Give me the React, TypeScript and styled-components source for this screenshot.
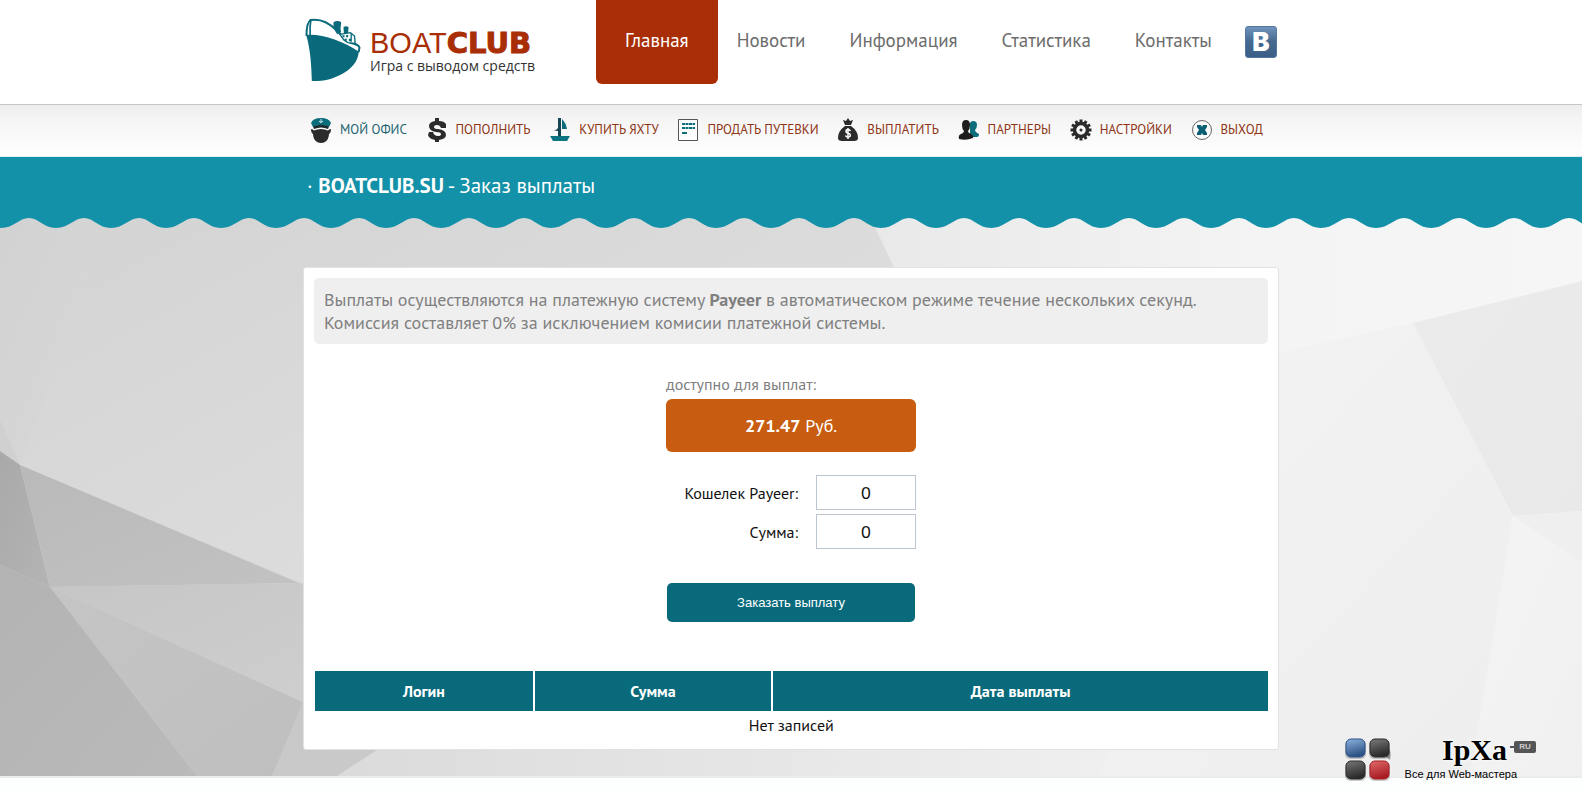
import React from "react";
import styled, { createGlobalStyle } from "styled-components";

const sans = `"PT Sans", "Noto Sans", sans-serif`;
const arial = `"Liberation Sans", Arial, sans-serif`;
const teal = "#086a7b";
const brick = "#a92e06";

const GlobalStyle = createGlobalStyle`
  * { box-sizing: border-box; }
  body { margin: 0; background: #fdfefe; font-family: ${sans}; font-size: 16px; color: #111; }
  a { text-decoration: none; }
`;

const Page = styled.div`
  position: relative;
  overflow: hidden;
`;

const Container = styled.div`
  width: 100%;
  max-width: 976px;
  margin: 0 auto;
`;

const Header = styled.header`
  background: #fff;
`;

const HeaderRow = styled(Container)`
  display: flex;
  align-items: flex-start;
  height: 104px;
`;

const Logo = styled.a`
  display: flex;
  align-items: flex-start;
  gap: 8px;
  padding: 17px 0 0 2px;
  width: 293px;
`;

const LogoText = styled.span`
  display: flex;
  flex-direction: column;
  padding-top: 12px;
`;

const LogoName = styled.span`
  font-family: ${arial};
  font-size: 29px;
  line-height: 29px;
  color: ${brick};
  white-space: nowrap;
`;

const LogoHeavy = styled.b`
  font-family: "DejaVu Sans", sans-serif;
  -webkit-text-stroke: 1px ${brick};
`;

const LogoTagline = styled.span`
  font-family: "Open Sans", sans-serif;
  font-size: 14px;
  line-height: 16px;
  color: #333;
  white-space: nowrap;
`;

const MainNav = styled.nav`
  display: flex;
`;

const MainLink = styled.a<{ $active?: boolean }>`
  height: 84px;
  padding: ${p => (p.$active ? "0 29px" : "0 19px")};
  margin-right: ${p => (p.$active ? "0" : "6px")};
  border-radius: 0 0 6px 6px;
  background: ${p => (p.$active ? brick : "transparent")};
  color: ${p => (p.$active ? "#fff" : "#6c6c6c")};
  font-size: 19px;
  line-height: 80px;
`;

const VkLink = styled.a`
  display: flex;
  align-items: center;
  justify-content: center;
  width: 32px;
  height: 32px;
  margin: 26px 2px 0 auto;
  border-radius: 3px;
  background: linear-gradient(#6f93ba, #44698f 50%, #3b5e86);
  border: 1px solid #54789f;
  color: #fff;
  font-family: Inter, sans-serif;
  font-weight: 900;
  font-size: 26px;
  line-height: 30px;
`;

const Strip = styled.div`
  border-top: 1px solid #c6c6c6;
  border-bottom: 1px solid #dff1f1;
  background: linear-gradient(#ededed, #f5f5f5 30%, #fff);
`;

const StripRow = styled(Container)`
  display: flex;
  justify-content: space-between;
  align-items: center;
  height: 51px;
  padding: 0 16px 2px 7px;
`;

const StripLink = styled.a<{ $current?: boolean }>`
  display: flex;
  align-items: center;
  gap: 8px;
  font-size: 13px;
  line-height: 26px;
  white-space: nowrap;
  color: ${p => (p.$current ? "#1d6470" : "#8e3414")};
`;

const TitleBar = styled.div`
  background: #1391a8;
`;

const Title = styled.h1`
  width: 100%;
  max-width: 976px;
  height: 60px;
  margin: 0 auto;
  padding-left: 4px;
  color: #fff;
  font-size: 21px;
  font-weight: 400;
  line-height: 58px;
`;

const Main = styled.main`
  position: relative;
  padding: 50px 0 26px;
`;

const Backdrop = styled.svg`
  position: absolute;
  inset: 0;
  width: 100%;
  height: 100%;
`;

const Wave = styled.svg`
  position: absolute;
  top: 0;
  left: 0;
  width: 100%;
  height: 12px;
`;

const Card = styled(Container)`
  position: relative;
  padding: 10px;
  background: #fff;
  border: 1px solid #e2e2e2;
  border-radius: 3px;
`;

const Notice = styled.p`
  margin: 0;
  padding: 10px;
  border-radius: 5px;
  background: #efefef;
  color: #808080;
  font-size: 18px;
  line-height: 23px;
`;

const Form = styled.form`
  display: flex;
  flex-direction: column;
  width: 250px;
  margin: 30px auto 49px;
`;

const Caption = styled.span`
  color: #808080;
  font-size: 16px;
  line-height: 20px;
`;

const Amount = styled.div`
  height: 53px;
  margin: 5px 0 23px;
  border-radius: 6px;
  background: #c85c10;
  color: #fff;
  font-size: 18px;
  line-height: 53px;
  text-align: center;
`;

const Field = styled.label`
  display: flex;
  align-items: center;
  justify-content: flex-end;
  gap: 18px;
  margin-bottom: 4px;
  white-space: nowrap;
`;

const Input = styled.input`
  width: 100px;
  height: 35px;
  padding: 0;
  border: 1px solid #bcc5d2;
  background: #fff;
  color: #111;
  font-family: ${sans};
  font-size: 18px;
  text-align: center;
`;

const Submit = styled.button`
  height: 39px;
  margin: 30px 1px 0;
  border: 0;
  border-radius: 5px;
  background: ${teal};
  color: #fff;
  font-family: ${arial};
  font-size: 13px;
`;

const Table = styled.table`
  width: 100%;
  border-collapse: collapse;
  table-layout: fixed;
`;

const HeadCell = styled.th<{ $share: string }>`
  width: ${p => p.$share};
  height: 40px;
  padding: 0;
  background: ${teal};
  color: #fff;
  font-size: 16px;
  border-left: 2px solid #fff;
  &:first-child { border-left-width: 1px; }
`;

const EmptyCell = styled.td`
  height: 28px;
  padding: 0;
  text-align: center;
`;

const Footer = styled.footer`
  height: 18px;
  border-top: 2px solid #ebebeb;
  background: #fdfefe;
`;

const Badge = styled.a`
  position: absolute;
  right: 46px;
  bottom: 12px;
  display: flex;
  align-items: flex-end;
  gap: 13px;
  color: #000;
`;

const BadgeText = styled.span`
  display: flex;
  flex-direction: column;
  padding-bottom: 1px;
`;

const BadgeTop = styled.span`
  display: flex;
  align-items: center;
  justify-content: flex-end;
  gap: 7px;
  padding-bottom: 4px;
`;

const BadgeName = styled.span`
  font-family: "Liberation Serif", serif;
  font-weight: 700;
  font-size: 30px;
  line-height: 26px;
  text-shadow: 0 0 2px #fff, 0 0 3px #fff;
`;

const BadgeTag = styled.span`
  position: relative;
  width: 22px;
  margin-bottom: 6px;
  border-radius: 2px;
  background: #555;
  color: #ccc;
  font-family: ${arial};
  font-weight: 700;
  font-size: 8px;
  line-height: 12px;
  text-align: center;

  &::before {
    content: "";
    position: absolute;
    left: -4px;
    top: 5px;
    width: 4px;
    height: 2px;
    background: #555;
  }
`;

const BadgeNote = styled.span`
  padding-right: 19px;
  font-family: ${arial};
  font-size: 11px;
  line-height: 14px;
`;

function Ship() {
  return (
    <svg width="57" height="65" viewBox="30 50 170 195" fill={teal} aria-hidden="true">
      <path d="M33 104C82 100 142 122 191 154C188 184 170 204 142 220C112 237 82 243 50 242C49 205 47 150 33 104Z" />
      <path d="M34 106C34 86 36 66 46 59C76 54 104 70 122 88C136 101 152 122 165 127C182 131 192 134 193 142L190 156" fill="none" stroke={teal} strokeWidth="6" />
      <path d="M47 60Q43 80 45 104" fill="none" stroke={teal} strokeWidth="5" />
      <path d="M115 66q12-8 23 0l-2 20 2 10-12 6-11-18zM145 80q8-5 15 0l-1 18h-13z" />
      <path d="M134 102l32-5 12 10 2 22-22-2-12-8z" fill="#fff" stroke={teal} strokeWidth="4" />
      <path d="M142 105h6v6h-6zM153 104h6v7h-6zM148 115h7v6h-7zM161 115h5v8h-5zM166 100h4v24h-4z" />
    </svg>
  );
}

type IconName = "captain" | "dollar" | "boat" | "list" | "bag" | "people" | "gear" | "exit";
const ink = "#2b2b2b";

const gearTeeth = Array.from({ length: 12 }, (_, i) => i * 30);

const drawings: Record<IconName, React.ReactNode> = {
  captain: (
    <>
      <path d="M1 6Q3 1 11 1Q19 1 21 6L19 10Q11 6 3 10Z" fill="#0c6d7b" />
      <path d="M11 2v4M9 4q2 3 4 0" stroke="#cfe6e8" fill="none" />
      <path d="M3 9.500Q11 6 19 9.500L18 12Q11 9 4 12Z" fill="#1b2b30" />
      <path d="M1 12Q3 12 4 13.500Q11 10.500 18 13.500Q19 12 21 12Q21 16 19 17Q19 22 15 25Q11 27 7 25Q3 22 3 17Q1 16 1 12Z" fill={ink} />
    </>
  ),
  dollar: (
    <path
      d="M9 1h4v3q5 0 7 3v4h-5q-1-3-4-3-3 0-3 2t4 2q8 1 8 6 0 4-7 5v2H9v-2q-6-1-7-5l1-3h4q1 4 5 4 3 0 3-2t-5-2q-7-1-7-6 0-4 6-5z"
      fill={ink}
    />
  ),
  boat: (
    <>
      <path d="M9 1h3v18H9z" fill="#154550" />
      <path d="M13 2Q17 6 18 12h-5z" fill="#0c6d7b" />
      <path d="M3 13q4 1 6-2v3z" fill="#154550" />
      <path d="M1 19h20l-3 5H4z" fill="#0c7480" />
    </>
  ),
  list: (
    <>
      <path d="M1.500 2.500h19v21h-19z" fill="#fdfdfd" stroke="#555" />
      <path d="M5 7h13M5 11h13" stroke="#0c6d7b" strokeWidth="2" strokeDasharray="3 .5" />
      <path d="M5 16h5" stroke="#0c6d7b" strokeWidth="2" />
    </>
  ),
  bag: (
    <>
      <path d="M6 3l3 1 2-3 2 3 3-1-2 5H8z" fill={ink} />
      <path d="M8 9h6q7 5 7 12 0 3-4 3H5q-4 0-4-3Q1 14 8 9Z" fill={ink} />
      <path d="M13.500 14q-1-1.500-2.500-1.500-2 0-2 1.700T11 16t2.300 2-2.300 2q-2 0-2.500-1.500M11 11v11" fill="none" stroke="#fff" strokeWidth="1.500" />
    </>
  ),
  people: (
    <>
      <path d="M15 4q4 0 4 4 0 3-2 5 0 2 4 4 0 3-2 3h-7V6q1-2 3-2Z" fill="#0c6d7b" />
      <path d="M8 3q4 0 4 5 0 4-2 6 0 2 3 3 3 2 2 4-7 3-14 1-1-4 2-5 3-1 3-3-2-2-2-6 0-5 4-5Z" fill="#1d1d1d" />
    </>
  ),
  gear: (
    <>
      {gearTeeth.map(angle => (
        <rect key={angle} x="9.500" y="2.500" width="3" height="4" fill={ink} transform={`rotate(${angle} 11 13)`} />
      ))}
      <circle cx="11" cy="13" r="6.500" fill="none" stroke={ink} strokeWidth="3.500" />
      <circle cx="11" cy="13" r="1.500" fill={ink} />
    </>
  ),
  exit: (
    <>
      <circle cx="11" cy="13" r="9.500" fill="#fafafa" stroke="#666" />
      <path d="M6 8h4l1 2 1-2h4v2l-2 3 2 3v2h-4l-1-2-1 2H6v-2l2-3-2-3z" fill="#0b5f72" />
    </>
  ),
};

function Icon({ name }: { name: IconName }) {
  return (
    <svg width="22" height="26" viewBox="0 0 22 26" aria-hidden="true">
      {drawings[name]}
    </svg>
  );
}

const mainLinks = ["Главная", "Новости", "Информация", "Статистика", "Контакты"];

const stripLinks: { icon: IconName; text: string }[] = [
  { icon: "captain", text: "МОЙ ОФИС" },
  { icon: "dollar", text: "ПОПОЛНИТЬ" },
  { icon: "boat", text: "КУПИТЬ ЯХТУ" },
  { icon: "list", text: "ПРОДАТЬ ПУТЕВКИ" },
  { icon: "bag", text: "ВЫПЛАТИТЬ" },
  { icon: "people", text: "ПАРТНЕРЫ" },
  { icon: "gear", text: "НАСТРОЙКИ" },
  { icon: "exit", text: "ВЫХОД" },
];

const facets: { points: string; from: string; to: string }[] = [
  { points: "0,217 108,217 20,465 0,420", from: "#d2d2d2", to: "#d8d8d8" },
  { points: "108,217 870,217 905,290 500,700 303,583 20,465", from: "#d3d3d3", to: "#e4e4e4" },
  { points: "0,420 20,465 0,451", from: "#d0d0d0", to: "#d0d0d0" },
  { points: "0,451 20,465 50,587 0,565", from: "#a9a9a9", to: "#b4b4b4" },
  { points: "20,465 299,583 50,587", from: "#b9b9b9", to: "#c2c2c2" },
  { points: "50,587 299,583 305,584 305,703", from: "#c6c6c6", to: "#cecece" },
  { points: "50,587 305,703 272,776 197,776", from: "#c5c5c5", to: "#bfbfbf" },
  { points: "0,565 50,587 197,776 0,776", from: "#b3b3b3", to: "#bababa" },
  { points: "303,702 400,735 337,776 272,776", from: "#c8c8c8", to: "#cacaca" },
  { points: "1270,355 1413,323 1513,516 1470,776 1100,776", from: "#f3f3f3", to: "#eeeeee" },
  { points: "1413,323 1582,281 1582,511 1513,516", from: "#ebebeb", to: "#e9e9e9" },
  { points: "1513,516 1582,511 1582,562", from: "#efefef", to: "#efefef" },
  { points: "1513,516 1582,562 1582,776 1470,776", from: "#f4f4f4", to: "#f0f0f0" },
];

function PaperBackdrop() {
  return (
    <Backdrop viewBox="0 217 1582 559" preserveAspectRatio="none" aria-hidden="true">
      <defs>
        <linearGradient id="ground">
          <stop offset="0" stopColor="#d2d2d2" />
          <stop offset=".55" stopColor="#e9e9e9" />
          <stop offset=".8" stopColor="#f4f4f4" />
          <stop offset="1" stopColor="#f6f6f6" />
        </linearGradient>
        {facets.map((f, i) => (
          <linearGradient key={i} id={`facet${i}`} x1="0" y1="0" x2="1" y2="1">
            <stop offset="0" stopColor={f.from} />
            <stop offset="1" stopColor={f.to} />
          </linearGradient>
        ))}
      </defs>
      <rect y="217" width="1582" height="559" fill="url(#ground)" />
      {facets.map((f, i) => (
        <polygon key={i} points={f.points} fill={`url(#facet${i})`} />
      ))}
    </Backdrop>
  );
}

function Blocks() {
  const blocks = [
    { x: 2, y: 1, light: "#8fb4de", dark: "#2c5286" },
    { x: 26, y: 1, light: "#7c7c7c", dark: "#2a2a2a" },
    { x: 2, y: 23, light: "#777777", dark: "#2a2a2a" },
    { x: 26, y: 23, light: "#e06a6a", dark: "#a81c22" },
  ];
  return (
    <svg width="48" height="44" viewBox="0 0 48 44" aria-hidden="true">
      <path d="M44 10q4 2 2 12l-4-3z" fill="#999" />
      {blocks.map((b, i) => (
        <g key={i}>
          <linearGradient id={`block${i}`} x2=".3" y2="1">
            <stop offset="0" stopColor={b.light} />
            <stop offset="1" stopColor={b.dark} />
          </linearGradient>
          <rect x={b.x - 1} y={b.y + 1} width="21" height="19" rx="5" fill="#000" opacity=".2" />
          <rect x={b.x} y={b.y} width="19" height="18" rx="5" fill={`url(#block${i})`} stroke={b.dark} />
        </g>
      ))}
    </svg>
  );
}

export default function App() {
  return (
    <Page>
      <GlobalStyle />
      <Header>
        <HeaderRow>
          <Logo href="#">
            <Ship />
            <LogoText>
              <LogoName>BOAT<LogoHeavy>CLUB</LogoHeavy></LogoName>
              <LogoTagline>Игра с выводом средств</LogoTagline>
            </LogoText>
          </Logo>
          <MainNav>
            {mainLinks.map((text, i) => (
              <MainLink key={text} href="#" $active={i === 0}>{text}</MainLink>
            ))}
          </MainNav>
          <VkLink href="#" aria-label="ВКонтакте">B</VkLink>
        </HeaderRow>
      </Header>
      <Strip>
        <StripRow as="nav">
          {stripLinks.map((item, i) => (
            <StripLink key={item.text} href="#" $current={i === 0}>
              <Icon name={item.icon} />
              {item.text}
            </StripLink>
          ))}
        </StripRow>
      </Strip>
      <TitleBar>
        <Title>· <b>BOATCLUB.SU</b> - Заказ выплаты</Title>
      </TitleBar>
      <Main>
        <PaperBackdrop />
        <Wave aria-hidden="true">
          <defs>
            <pattern id="wave" x="1" width="55" height="12" patternUnits="userSpaceOnUse">
              <path d="M0 0H55V11C42 11 38 1 28 1C18 1 13 11 0 11Z" fill="#1391a8" />
            </pattern>
          </defs>
          <rect width="100%" height="12" fill="url(#wave)" />
        </Wave>
        <Card>
          <Notice>
            Выплаты осуществляются на платежную систему <b>Payeer</b> в автоматическом режиме течение нескольких секунд.
            <br />
            Комиссия составляет 0% за исключением комисии платежной системы.
          </Notice>
          <Form onSubmit={e => e.preventDefault()}>
            <Caption>доступно для выплат:</Caption>
            <Amount><b>271.47</b> Руб.</Amount>
            <Field>Кошелек Payeer:<Input defaultValue="0" name="wallet" /></Field>
            <Field>Сумма:<Input defaultValue="0" name="sum" /></Field>
            <Submit type="submit">Заказать выплату</Submit>
          </Form>
          <Table>
            <thead>
              <tr>
                <HeadCell $share="23%">Логин</HeadCell>
                <HeadCell $share="25%">Сумма</HeadCell>
                <HeadCell $share="52%">Дата выплаты</HeadCell>
              </tr>
            </thead>
            <tbody>
              <tr><EmptyCell colSpan={3}>Нет записей</EmptyCell></tr>
            </tbody>
          </Table>
        </Card>
      </Main>
      <Footer />
      <Badge href="#">
        <Blocks />
        <BadgeText>
          <BadgeTop>
            <BadgeName>IpXa</BadgeName>
            <BadgeTag>RU</BadgeTag>
          </BadgeTop>
          <BadgeNote>Все для Web-мастера</BadgeNote>
        </BadgeText>
      </Badge>
    </Page>
  );
}
